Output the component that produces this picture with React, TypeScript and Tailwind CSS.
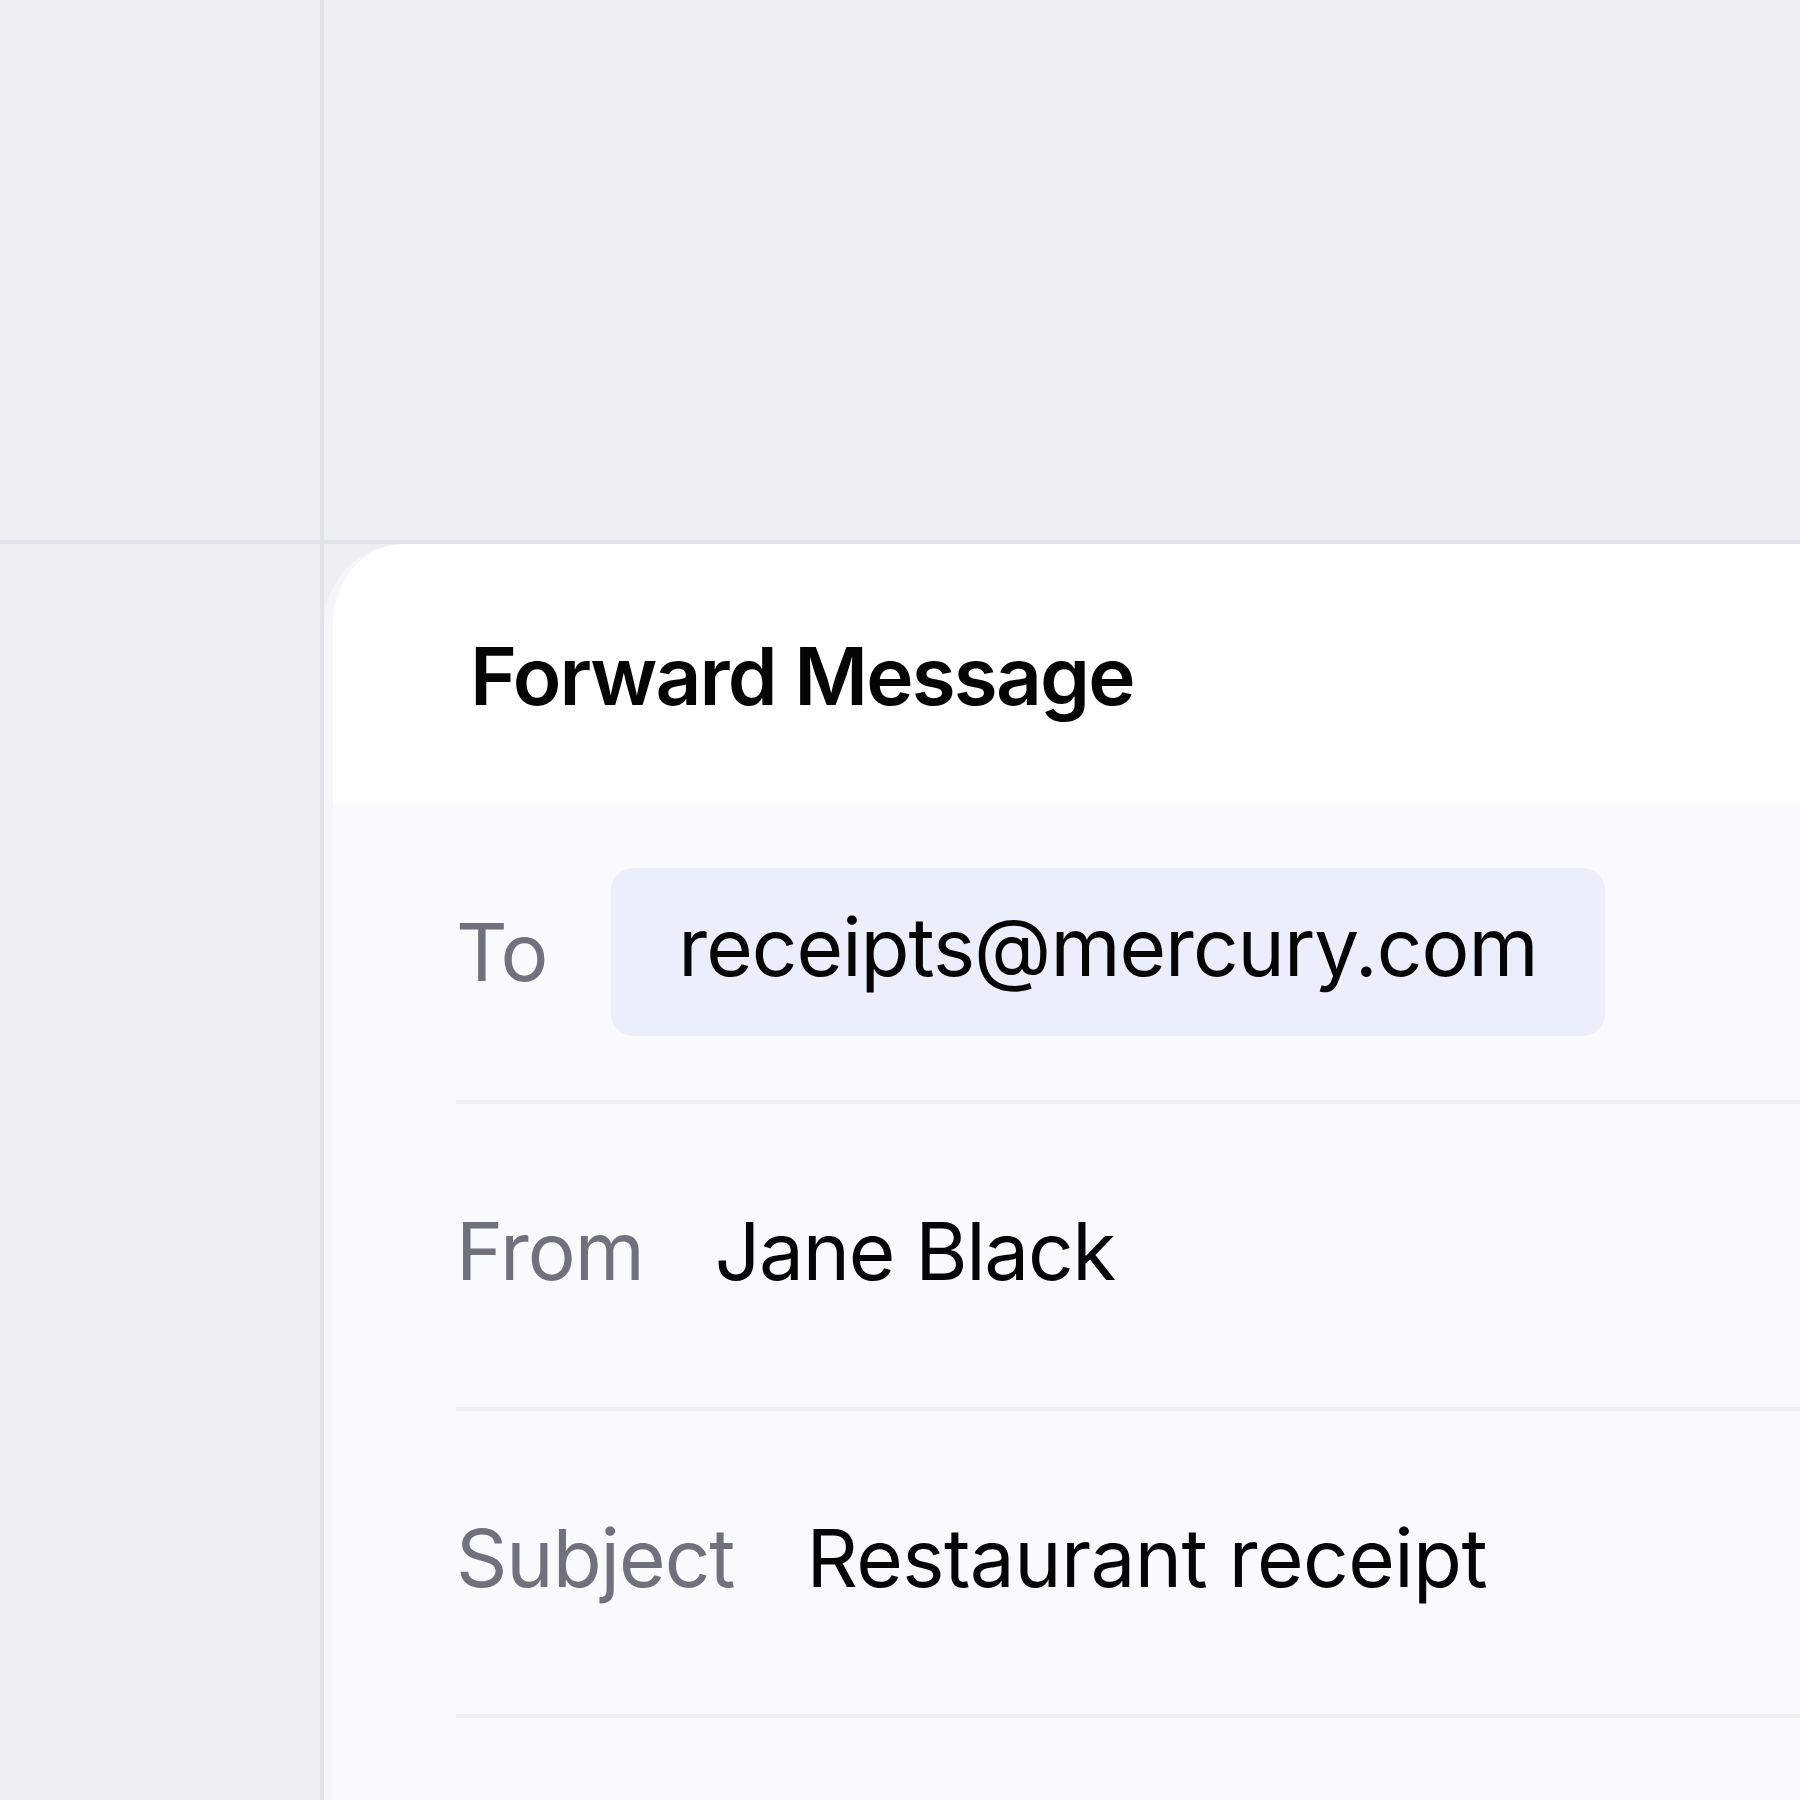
import React from "react";

const font = { fontFamily: "Inter, 'Noto Sans', sans-serif" };

function Row({
  label,
  children,
  first,
}: {
  label: string;
  children: React.ReactNode;
  first?: boolean;
}) {
  return (
    <div
      className={`flex items-center border-b-4 border-[#eff0f4] ${
        first ? "h-[301px]" : "h-[307px] pb-[10px]"
      }`}
    >
      <div className="text-[80px] leading-none text-[#71717e] tracking-[-1px]">{label}</div>
      {children}
    </div>
  );
}

export default function App() {
  return (
    <div
      className="w-[1800px] h-[1800px] overflow-hidden bg-[#eeeef3] flex flex-col"
      style={font}
    >
      <div className="flex h-[544px] border-b-4 border-[#e2e2ea] shrink-0">
        <div className="w-[324px] border-r-4 border-[#e2e2ea]" />
        <div className="flex-1" />
      </div>
      <div className="flex flex-1">
        <div className="w-[324px] border-r-4 border-[#e2e2ea] shrink-0" />
        <div className="flex-1 rounded-tl-[80px] bg-[#fafafd] border-l-[9px] border-[#f6f6f9] overflow-hidden flex flex-col">
          <div className="bg-white h-[259px] pt-[92px] pl-[137px] shrink-0">
            <div className="text-[80px] leading-none font-semibold text-[#050505] tracking-[-1.8px]">
              Forward Message
            </div>
          </div>
          <div className="pl-[123px] flex flex-col">
            <Row label="To" first>
              <div className="ml-[64px] h-[168px] rounded-[22px] bg-[#eceefb] px-[67px] flex items-center pb-[10px]">
                <span className="text-[80px] leading-none text-[#050505] tracking-[-1px]">
                  receipts@mercury.com
                </span>
              </div>
            </Row>
            <Row label="From">
              <span className="ml-[71px] text-[80px] leading-none text-[#050505] tracking-[-1.3px]">
                Jane Black
              </span>
            </Row>
            <Row label="Subject">
              <span className="ml-[72px] text-[80px] leading-none text-[#050505] tracking-[-0.6px]">
                Restaurant receipt
              </span>
            </Row>
            <div className="h-[200px]" />
          </div>
        </div>
      </div>
    </div>
  );
}
